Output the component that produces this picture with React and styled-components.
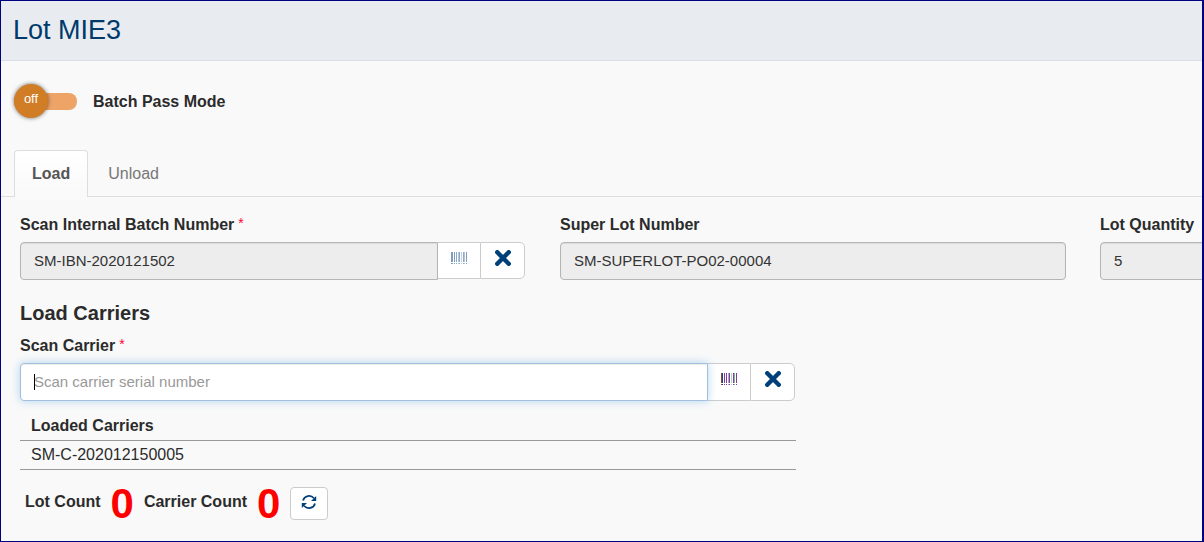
import React from "react";
import styled, { createGlobalStyle, css, keyframes } from "styled-components";

const Global = createGlobalStyle`
  *, *::before, *::after { box-sizing: border-box; }
  body { margin: 0; background: #f9f9f9; }
  body, button, input { font-family: "Liberation Sans", Arial, Helvetica, sans-serif; }
`;

const Page = styled.main`
  min-height: 100vh;
  padding-bottom: 12px;
  overflow: hidden;
  border: 1px solid #000080;
  border-right-width: 2px;
  background: #f9f9f9;
  color: #2b2b2b;
  font-size: 16px;
  line-height: 20px;
`;

const Header = styled.header`
  height: 60px;
  padding: 12px;
  border-bottom: 1px solid #dadfe6;
  background: #e8ecf1;
`;

const Title = styled.h1`
  margin: 0;
  color: #003a6b;
  font-size: 27px;
  font-weight: 400;
  line-height: 34px;
`;

const ModeRow = styled.div`
  display: flex;
  align-items: center;
  gap: 16px;
  height: 36px;
  margin: 22px 0 31px 13px;
`;

const Switch = styled.button`
  display: flex;
  align-items: center;
  width: 63px;
  height: 17px;
  padding: 0;
  border: 0;
  border-radius: 8px;
  background: #eea467;
`;

const Knob = styled.span`
  width: 34px;
  height: 34px;
  border-radius: 50%;
  background: #d07d26;
  box-shadow: 0 0 4px rgba(0, 0, 0, 0.55);
  color: #fff;
  font-size: 13px;
  line-height: 30px;
`;

const ModeLabel = styled.span`
  padding-top: 2px;
  font-weight: 700;
`;

const Tabs = styled.div`
  display: flex;
  gap: 2px;
  padding-left: 13px;
  box-shadow: inset 0 -1px #dddddd;
`;

const Tab = styled.button`
  height: 47px;
  padding: 0 17px;
  border: 1px solid ${(p) => (p.$active ? "#dddddd" : "transparent")};
  border-bottom: 0;
  border-radius: 4px 4px 0 0;
  background: ${(p) => (p.$active ? "linear-gradient(#ffffff, #f9f9f9)" : "transparent")};
  color: ${(p) => (p.$active ? "#555555" : "#777777")};
  font-size: 16px;
  font-weight: ${(p) => (p.$active ? 700 : 400)};
  line-height: 20px;
`;

const Panel = styled.section`
  padding: 18px 0 0 19px;
`;

const Fields = styled.div`
  display: grid;
  grid-template-columns: 1fr 1fr 102px;
  gap: 34px;
`;

const Field = styled.div`
  display: flex;
  flex-direction: column;
  gap: 7px;
  min-width: 0;
`;

const Label = styled.label`
  font-weight: 700;
  white-space: nowrap;
`;

const Required = styled.span`
  margin-left: 4px;
  color: #ff0033;
  font-size: 14px;
  font-weight: 400;
  line-height: 0;
  vertical-align: 2px;
`;

const Group = styled.div`
  position: relative;
  display: flex;
  align-items: flex-start;
  padding-right: ${(p) => (p.$addons ? 1 : 0)}px;
`;

const TextInput = styled.input`
  flex: 1;
  min-width: 0;
  height: 38px;
  padding: 0 13px 2px;
  border: 1px solid #b5b5b5;
  border-radius: ${(p) => (p.$joined ? "4px 0 0 4px" : "4px")};
  background: #ededed;
  box-shadow: inset 0 1px 1px rgba(0, 0, 0, 0.08);
  color: #333333;
  font-size: 15px;
  outline: 0;
  &::placeholder { color: #999999; opacity: 1; }
  ${(p) =>
    p.$focused &&
    css`
      position: relative;
      border-color: #a3bfdb;
      background: #ffffff;
      box-shadow: inset 0 1px 1px rgba(0, 0, 0, 0.08), 0 0 8px rgba(102, 175, 233, 0.5);
      caret-color: transparent;
    `}
`;

const WideInput = styled(TextInput)`
  flex: 0 0 calc(100% + 34px);
`;

const Caret = styled.span`
  position: absolute;
  top: 11px;
  left: 14px;
  width: 1px;
  height: 16px;
  background: #000000;
  pointer-events: none;
  input:not(:placeholder-shown) + & { display: none; }
`;

const AddonButton = styled.button`
  display: flex;
  align-items: center;
  justify-content: center;
  width: ${(p) => (p.$last ? 45 : 42)}px;
  height: ${(p) => (p.$tall ? 38 : 37)}px;
  padding: 0 0 6px;
  border: 1px solid #cccccc;
  border-left-width: ${(p) => (p.$last ? 1 : 0)}px;
  border-right-width: ${(p) => (p.$last ? 1 : 0)}px;
  border-radius: ${(p) => (p.$last ? "0 5px 5px 0" : "0")};
  background: #ffffff;
`;

const Heading = styled.h2`
  margin: 21px 0 11px;
  font-size: 20px;
  font-weight: 700;
  line-height: 24px;
`;

const Carriers = styled.div`
  max-width: 776px;
`;

const CarrierTable = styled.table`
  width: 100%;
  margin-top: 10px;
  border-collapse: collapse;
  text-align: left;
`;

const Cell = styled.td`
  height: 29px;
  padding: 0 11px;
  border-bottom: 1px solid #999999;
  font-weight: 400;
`;

const HeadCell = styled(Cell)`
  padding-top: 1px;
  font-weight: 700;
`;

const Counts = styled.div`
  display: flex;
  align-items: center;
  gap: 10px;
  margin-top: 14px;
  padding-left: 5px;
`;

const CountLabel = styled.span`
  padding-bottom: 4px;
  font-weight: 700;
`;

const CountValue = styled.output`
  color: #ff0000;
  font-size: 42px;
  font-weight: 700;
  line-height: 40px;
`;

const RefreshButton = styled.button`
  display: flex;
  align-items: center;
  justify-content: center;
  width: 38px;
  height: 33px;
  padding: 0 0 3px;
  border: 1px solid #cccccc;
  border-radius: 4px;
  background: #ffffff;
`;

const bars = [
  [0, 1, "#8a4b3c", "#7f9dc0"], [1, 1, "#1f3f9c", "#7f9dc0"], [3, 1, "#7d3fa0", "#7f9dc0"],
  [5, 1, "#7d3fa0", "#8ea9c6"], [7, 1, "#b9a3c8", "#b4c5d8"], [8, 1, "#7d3fa0", "#8ea9c6"],
  [10, 1, "#a9dcb4", "#c3d0e0"], [12, 1, "#7d3fa0", "#8ea9c6"], [13, 1, "#8bb89c", "#b4c5d8"],
  [15, 1, "#7d3fa0", "#7f9dc0"],
];

function Barcode({ muted }) {
  return (
    <svg width="16" height="12" viewBox="0 0 16 12" shapeRendering="crispEdges" aria-hidden="true">
      {bars.map(([x, w, color, soft]) => (
        <g key={x} fill={muted ? soft : color}>
          <rect x={x} y="0" width={w} height="10" />
          <rect x={x} y="11" width={w} height="1" />
        </g>
      ))}
    </svg>
  );
}

function Cross() {
  return (
    <svg width="16" height="16" viewBox="0 0 16 16" aria-hidden="true">
      <path d="M2.3 2.3L13.7 13.7M13.7 2.3L2.3 13.7" stroke="#00407a" strokeWidth="4.4" strokeLinecap="square" />
    </svg>
  );
}

function Refresh() {
  return (
    <svg width="16" height="16" viewBox="0 0 16 16" fill="none" stroke="#00407a" strokeWidth="1.7" aria-hidden="true">
      <path d="M2 6.6C3.4 1.6 9.6 .4 13 4.2M14 9.4C12.6 14.4 6.4 15.6 3 11.8" />
      <path d="M15.2 2V7H10ZM.8 14V9H6Z" fill="#00407a" stroke="none" />
    </svg>
  );
}

export default function App() {
  return (
    <>
      <Global />
      <Page>
        <Header><Title>Lot MIE3</Title></Header>
        <ModeRow>
          <Switch type="button" role="switch" aria-checked="false" aria-labelledby="mode">
            <Knob>off</Knob>
          </Switch>
          <ModeLabel id="mode">Batch Pass Mode</ModeLabel>
        </ModeRow>
        <Tabs role="tablist">
          <Tab type="button" role="tab" aria-selected="true" $active>Load</Tab>
          <Tab type="button" role="tab" aria-selected="false">Unload</Tab>
        </Tabs>
        <Panel>
          <Fields>
            <Field>
              <Label htmlFor="batch">Scan Internal Batch Number<Required>*</Required></Label>
              <Group $addons>
                <TextInput id="batch" readOnly $joined defaultValue="SM-IBN-2020121502" />
                <AddonButton type="button" disabled aria-label="Scan batch"><Barcode muted /></AddonButton>
                <AddonButton type="button" $last aria-label="Clear batch"><Cross /></AddonButton>
              </Group>
            </Field>
            <Field>
              <Label htmlFor="superlot">Super Lot Number</Label>
              <Group><TextInput id="superlot" readOnly defaultValue="SM-SUPERLOT-PO02-00004" /></Group>
            </Field>
            <Field>
              <Label htmlFor="quantity">Lot Quantity</Label>
              <Group><WideInput id="quantity" readOnly defaultValue="5" /></Group>
            </Field>
          </Fields>
          <Heading>Load Carriers</Heading>
          <Carriers>
            <Field>
              <Label htmlFor="carrier">Scan Carrier<Required>*</Required></Label>
              <Group $addons>
                <TextInput id="carrier" autoFocus $joined $focused placeholder="Scan carrier serial number" />
                <Caret />
                <AddonButton type="button" $tall aria-label="Scan carrier"><Barcode /></AddonButton>
                <AddonButton type="button" $tall $last aria-label="Clear carrier"><Cross /></AddonButton>
              </Group>
            </Field>
            <CarrierTable>
              <thead><tr><HeadCell as="th" scope="col">Loaded Carriers</HeadCell></tr></thead>
              <tbody><tr><Cell>SM-C-202012150005</Cell></tr></tbody>
            </CarrierTable>
          </Carriers>
          <Counts>
            <CountLabel>Lot Count</CountLabel>
            <CountValue>0</CountValue>
            <CountLabel>Carrier Count</CountLabel>
            <CountValue>0</CountValue>
            <RefreshButton type="button" aria-label="Refresh counts"><Refresh /></RefreshButton>
          </Counts>
        </Panel>
      </Page>
    </>
  );
}
